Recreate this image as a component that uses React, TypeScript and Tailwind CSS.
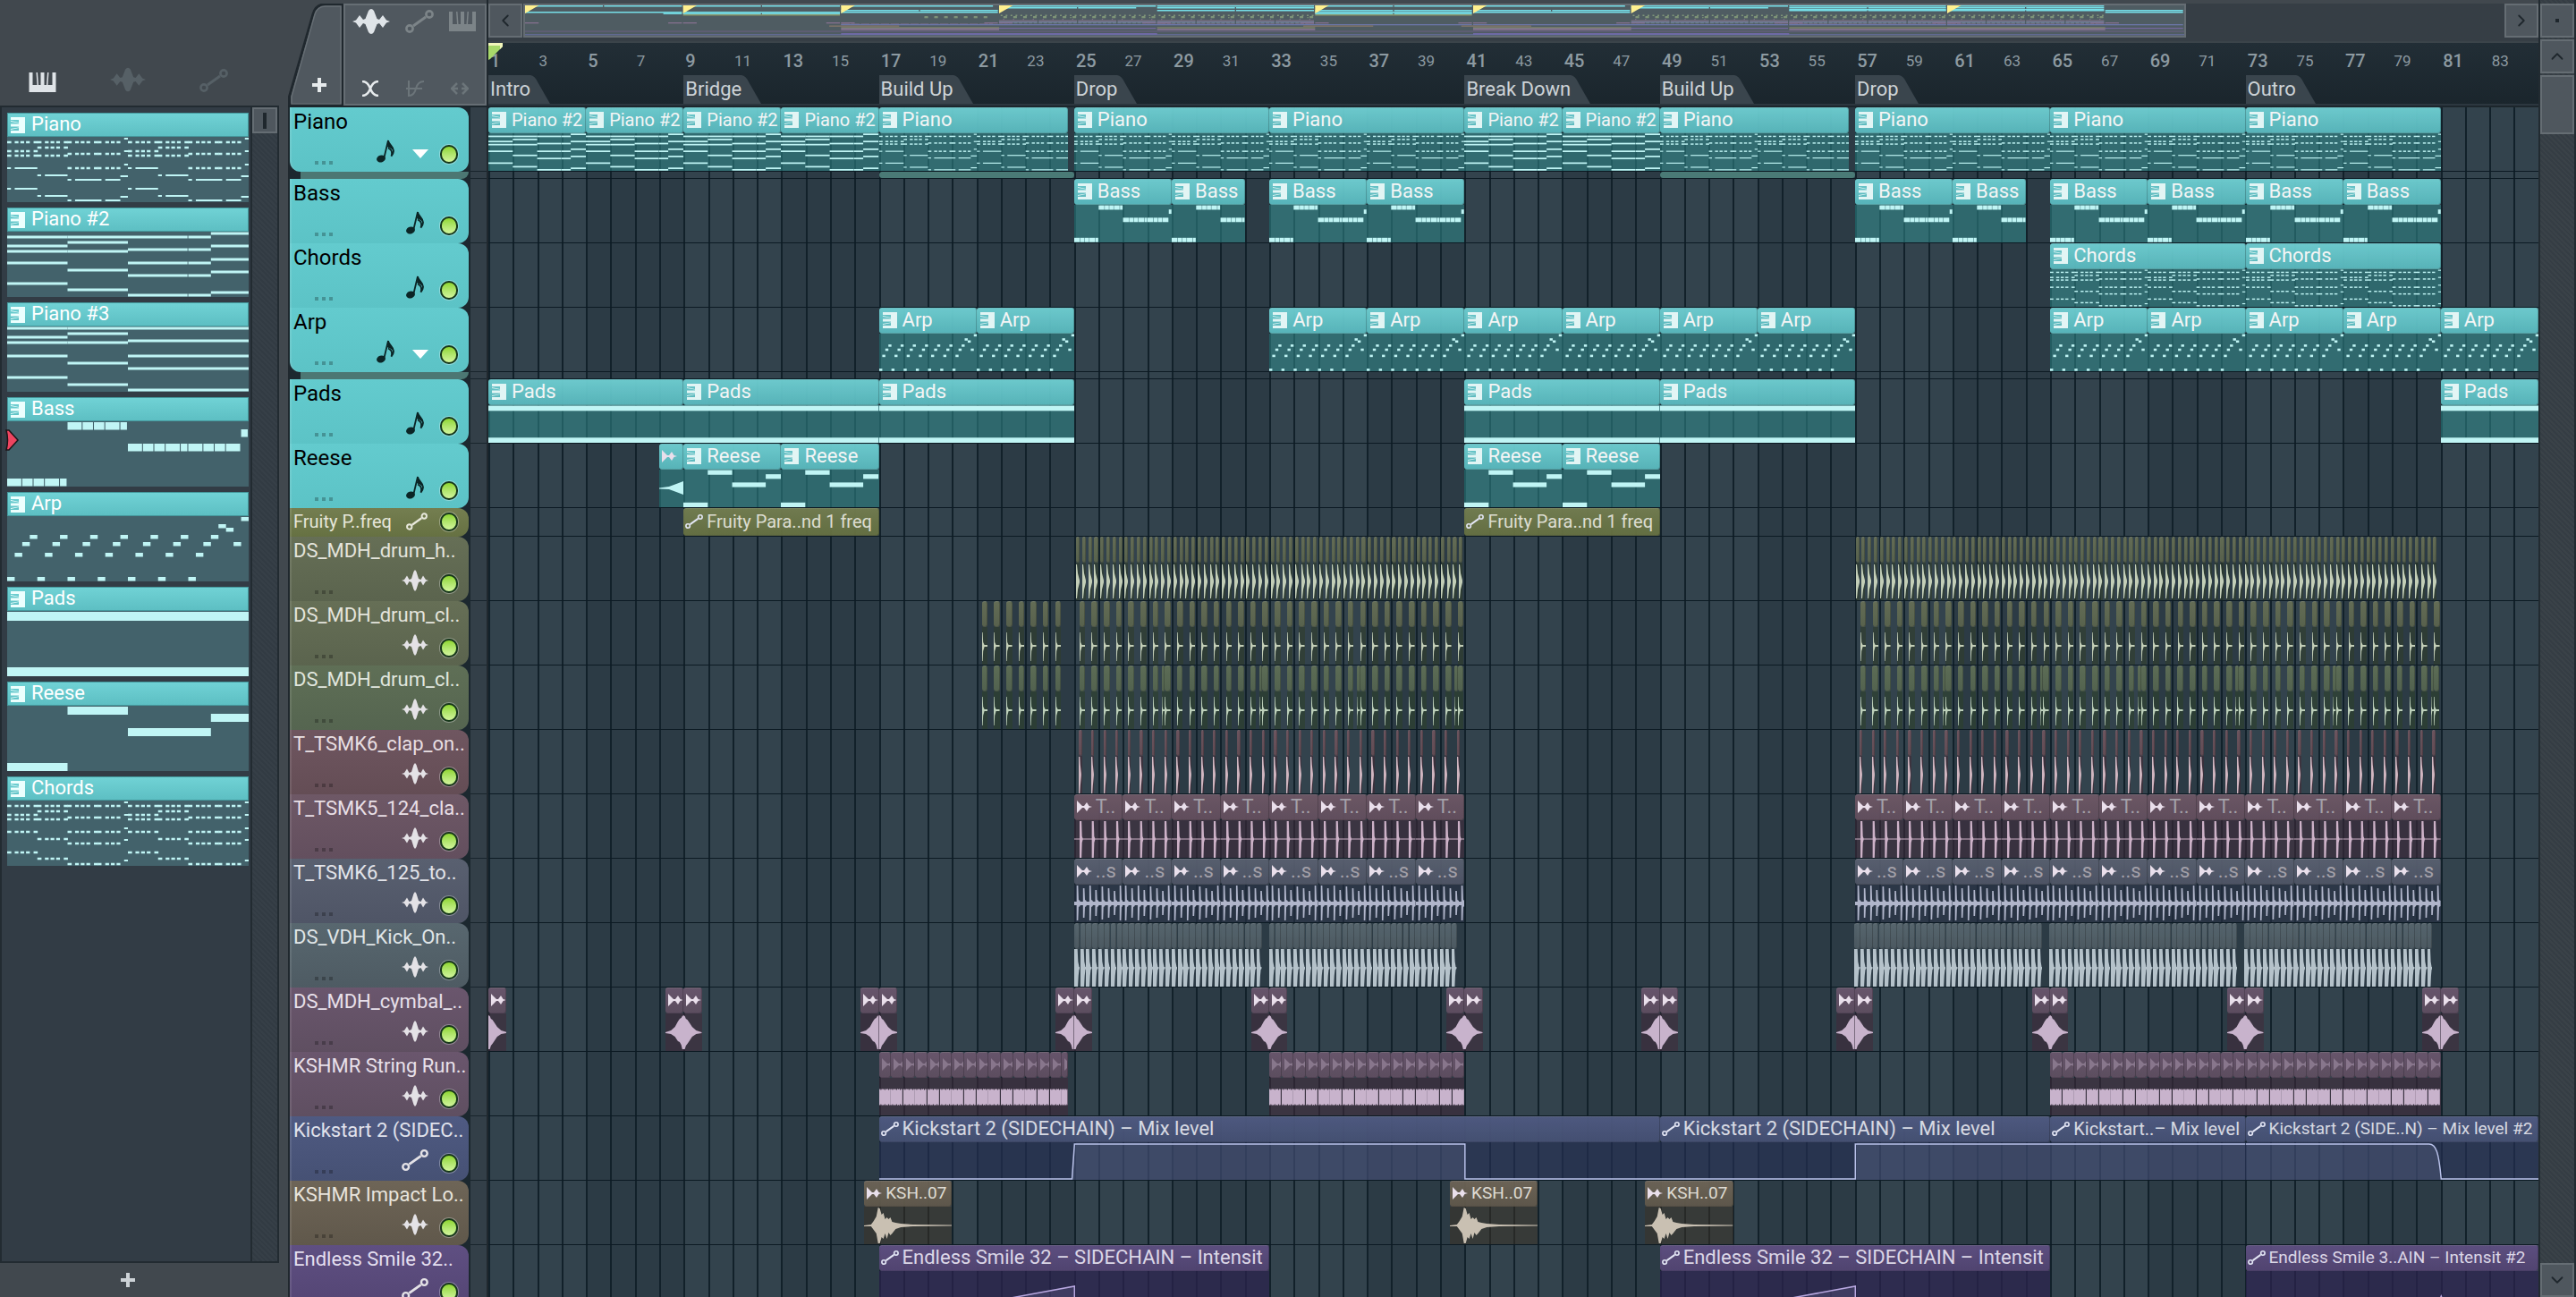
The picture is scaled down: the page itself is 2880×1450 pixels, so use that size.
import { Fragment } from 'react';
import { ChevronDown, ChevronLeft, ChevronRight, ChevronUp } from 'lucide-react';

const BARS = 84;

type Note = [x: number, y: number, w: number, h: number];
type Clip = { at: number; len: number; name?: string; art: string; size?: 'md' | 'sm'; dim?: boolean; curve?: string };
type Track = { name: string; theme: string; icon: 'note' | 'wave' | 'auto'; sub?: boolean; slim?: boolean; clips: Clip[] };

// Sixteen units to a bar, 73 units high.
const bars = (x: number, w: number, ys: number[], h = 3): Note[] => ys.map((y) => [x, y - h / 2, w, h]);
const hits = (x: number, steps: number[], ys: number[]): Note[] =>
    steps.flatMap((s) => bars(x + s, s === 14 || s === 0 ? 2.2 : 2, ys, 2.5));

const rhythm = [0, 4, 7, 10, 14];
const longRhythm = [0, 4, 7, 10, 14, 16, 20, 23, 26];

const pianoHalf = (x: number): Note[] => [
    ...hits(x, rhythm, [6, 16, 21]),
    ...bars(x, 2, [35, 58], 2),
    ...bars(x + 4, 12, [35, 58], 2),
    ...hits(x + 16, rhythm, [6, 12, 21]),
    ...bars(x + 16, 2, [43, 66], 2),
    ...bars(x + 20, 12, [43, 66], 2),
    ...hits(x + 32, longRhythm, [6, 19, 35]),
    ...bars(x + 32, 2, [48, 71], 2),
    ...bars(x + 36, 14, [48, 71], 2),
    ...bars(x + 52, 8, [48, 71], 2),
    ...bars(x + 60, 4, [44, 67], 2),
    ...bars(x + 62, 2, [2, 16, 31], 2),
];

const chordHalf = (x: number): Note[] => [
    ...hits(x, rhythm, [6, 16, 21, 35, 58]),
    ...hits(x + 16, rhythm, [6, 12, 21, 43, 65]),
    ...hits(x + 32, longRhythm, [6, 19, 35, 48, 71]),
    ...bars(x + 62, 2, [2, 16, 31, 44, 67], 2),
];

const pieces = (edges: number[], y: number): Note[] =>
    edges.slice(1).map((end, i) => [edges[i], y, end - edges[i] - 0.25, 8.5]);

const notes: Record<string, Note[]> = {
    Piano: [...pianoHalf(0), ...pianoHalf(64)],
    'Piano #2': [
        ...bars(0, 16, [6, 16, 22, 35, 58]),
        ...bars(16, 16, [6, 12, 22, 43, 65]),
        ...bars(32, 15.8, [6, 20, 35, 49, 71]),
        ...bars(48, 6, [6, 20, 35, 49, 71]),
        ...bars(54, 10, [2, 16, 31, 45, 68]),
    ],
    'Piano #3': [
        ...bars(0, 16, [2, 12, 18, 33, 57]),
        ...bars(16, 16, [2, 8, 18, 41, 65]),
        ...bars(32, 32, [2, 16, 33, 47, 71]),
    ],
    Bass: [
        ...pieces([0, 4, 7, 10, 14, 16], 64),
        ...pieces([16, 20, 23, 26, 30, 32], 1),
        ...pieces([32, 36, 39, 42, 46, 48, 52, 55, 58, 62], 25),
        ...pieces([62, 64], 9),
    ],
    Arp: [
        ...[0, 8, 16, 24, 32, 40, 48].flatMap((x): Note[] => [
            [x, 68, 2, 4.5],
            [x + 2, 41, 2, 4.5],
            [x + 4, 29, 2, 4.5],
            [x + 6, 21, 2, 4.5],
        ]),
        [56, 9, 2, 4.5],
        [58, 13, 2, 4.5],
        [60, 29, 2, 4.5],
        [62, 1, 2, 4.5],
    ],
    Pads: [
        [0, 1, 128, 10],
        [0, 63, 128, 10],
    ],
    Reese: [
        [0, 64, 16, 9],
        [16, 1, 16, 9],
        [32, 25, 22, 9],
        [54, 9, 10, 9],
    ],
    Chords: [...chordHalf(0), ...chordHalf(64)],
};

const waves: Record<string, string> = {
    hat: 'M0 2L25 2L50 12L100 20V22L50 30L25 40L0 40Z',
    snare: 'M0 6L10 6L18 17L40 20L100 20V22L40 22L18 27L10 38L0 38Z',
    clap: 'M0 1L40 1L55 10L90 20V22L55 34L40 42L0 42Z',
    kick: 'M0 0L56 0L66 14L84 20L100 20V22L84 23L72 30L62 42L0 42Z',
    rise: 'M0 20.5L40 19L70 16L100 13V28L70 25L40 22L0 21.5Z',
    swell: 'M0 21L30 19L52 15L68 9L78 6L86 5L92 3L100 2V40L92 40L86 35L78 32L68 31L52 26L30 23L0 22Z',
    crash: 'M0 2L8 3L14 6L22 7L32 10L48 15L70 19L100 21V22L70 23L48 26L32 31L22 34L14 36L8 40L0 40Z',
    string: 'M0 13L8 12L14 14L22 12L30 13L38 12L46 14L54 12L62 13L70 12L78 14L86 12L94 13V30L86 31L78 29L70 31L62 30L54 31L46 29L38 31L30 30L22 31L14 29L8 31L0 30Z',
    impact: 'M0 21L8 20L11 16L14 11L16 1L18 2L20 9L22 7L24 14L26 12L28 14L30 12L32 17L36 18L42 19L56 20L100 20.5V21.5L56 22L42 23L36 25L32 30L30 32L28 29L26 36L24 30L22 36L20 34L18 41L16 41L14 30L11 26L8 22L0 22Z',
};

// Two bars of claps, one spike every half bar.
const spikes = [0, 1, 2, 3].map((i) => {
    const x = 11 + i * 25;
    return `M${x} 1L${x + 4} 1L${x + 5} 18L${x + 7} 21L${x + 5} 25L${x + 4} 42L${x} 42Z`;
});
waves.claps = `M0 20.5H100V21.5H0Z${spikes.join('')}`;

const tops = [[5, 1], [18, 4], [31, 1], [43, 6], [56, 2], [69, 4], [81, 7], [93, 1]].map(
    ([x, y]) => `M${x} ${y}L${x + 3} ${y}L${x + 4} 17L${x + 7} 18V24L${x + 4} 25L${x + 3} ${41 - y}L${x} ${41 - y}Z`
);
waves.tops = `M0 19H100V23H0Z${tops.join('')}`;

const every = (from: number, to: number, step: number, offset: number, len: number, art: string, name?: string): Clip[] => {
    const out: Clip[] = [];
    for (let at = from; at < to - 0.01; at += step) {
        out.push({ at: at + offset, len: Math.min(len, to - at - offset), art, name, dim: true });
    }
    return out;
};

const pattern = (name: string, len: number, ...starts: number[]): Clip[] =>
    starts.map((at) => ({ at, len, name, art: name, size: name === 'Piano #2' ? 'md' : undefined }));

const tracks: Track[] = [
    {
        name: 'Piano', theme: 'teal', icon: 'note', sub: true,
        clips: [
            ...pattern('Piano #2', 4, 1, 5, 9, 13),
            ...pattern('Piano', 7.75, 17),
            ...pattern('Piano', 8, 25, 33),
            ...pattern('Piano #2', 4, 41, 45),
            ...pattern('Piano', 7.75, 49),
            ...pattern('Piano', 8, 57, 65, 73),
        ],
    },
    {
        name: 'Bass', theme: 'teal', icon: 'note',
        clips: [
            ...pattern('Bass', 4, 25), ...pattern('Bass', 3, 29), ...pattern('Bass', 4, 33, 37),
            ...pattern('Bass', 4, 57), ...pattern('Bass', 3, 61), ...pattern('Bass', 4, 65, 69, 73, 77),
        ],
    },
    { name: 'Chords', theme: 'teal', icon: 'note', clips: pattern('Chords', 8, 65, 73) },
    { name: 'Arp', theme: 'teal', icon: 'note', sub: true, clips: pattern('Arp', 4, 17, 21, 33, 37, 41, 45, 49, 53, 65, 69, 73, 77, 81) },
    { name: 'Pads', theme: 'teal', icon: 'note', clips: [...pattern('Pads', 8, 1, 9, 17, 41, 49), ...pattern('Pads', 4, 81)] },
    { name: 'Reese', theme: 'teal', icon: 'note', clips: [{ at: 8, len: 1, art: 'rise', name: '' }, ...pattern('Reese', 4, 9, 13, 41, 45)] },
    {
        name: 'Fruity P..freq', theme: 'lime', icon: 'auto', slim: true,
        clips: [9, 41].map((at) => ({ at, len: 8, art: 'auto', name: 'Fruity Para..nd 1 freq', size: 'md' as const })),
    },
    { name: 'DS_MDH_drum_h..', theme: 'olive', icon: 'wave', clips: [...every(25, 41, 0.25, 0.08, 0.15, 'hat'), ...every(57, 81, 0.25, 0.08, 0.15, 'hat')] },
    {
        name: 'DS_MDH_drum_cl..', theme: 'olive', icon: 'wave',
        clips: [...every(21, 24.5, 0.5, 0.22, 0.24, 'snare'), ...every(25, 41, 0.5, 0.22, 0.24, 'snare'), ...every(57, 81, 0.5, 0.22, 0.24, 'snare')],
    },
    {
        name: 'DS_MDH_drum_cl..', theme: 'moss', icon: 'wave',
        clips: [
            ...every(21, 24.5, 0.5, 0.22, 0.24, 'snare'),
            ...every(25, 41, 0.5, 0.22, 0.24, 'snare'),
            ...every(57, 81, 0.5, 0.22, 0.24, 'snare'),
            // pickup hit before the last clap of each phrase
            ...every(25, 41, 4, 3.6, 0.12, 'snare'),
            ...every(57, 81, 4, 3.6, 0.12, 'snare'),
        ].sort((a, b) => a.at - b.at),
    },
    { name: 'T_TSMK6_clap_on..', theme: 'rose', icon: 'wave', clips: [...every(25, 41, 0.5, 0.2, 0.12, 'clap'), ...every(57, 81, 0.5, 0.2, 0.12, 'clap')] },
    { name: 'T_TSMK5_124_cla..', theme: 'mauve', icon: 'wave', clips: [...every(25, 41, 2, 0, 2, 'claps', 'T..'), ...every(57, 81, 2, 0, 2, 'claps', 'T..')] },
    { name: 'T_TSMK6_125_to..', theme: 'slate', icon: 'wave', clips: [...every(25, 41, 2, 0, 2, 'tops', '..s'), ...every(57, 81, 2, 0, 2, 'tops', '..s')] },
    { name: 'DS_VDH_Kick_On..', theme: 'steel', icon: 'wave', clips: [25, 33, 57, 65, 73].flatMap((at) => every(at, at + 7.7, 0.25, 0, 0.24, 'kick')) },
    {
        name: 'DS_MDH_cymbal_..', theme: 'plum', icon: 'wave',
        clips: [1, 9, 17, 25, 33, 41, 49, 57, 65, 73, 81].flatMap((at) => [
            ...(at > 1 ? [{ at: at - 0.75, len: 0.75, art: 'swell', name: '' }] : []),
            { at, len: 0.75, art: 'crash', name: '' },
        ]),
    },
    {
        name: 'KSHMR String Run..', theme: 'plum', icon: 'wave',
        clips: [...every(17, 24.75, 0.5, 0, 0.5, 'string', ''), ...every(33, 41, 0.5, 0, 0.5, 'string', ''), ...every(65, 81, 0.5, 0, 0.5, 'string', '')],
    },
    {
        name: 'Kickstart 2 (SIDEC..', theme: 'blue', icon: 'auto',
        clips: [
            { at: 17, len: 32, art: 'auto', name: 'Kickstart 2 (SIDECHAIN) – Mix level', curve: 'M0 41H79L80 2H240V41H320' },
            { at: 49, len: 16, art: 'auto', name: 'Kickstart 2 (SIDECHAIN) – Mix level', curve: 'M0 41H80V2H160' },
            { at: 65, len: 8, art: 'auto', name: 'Kickstart..– Mix level', size: 'md', curve: 'M0 2H80' },
            { at: 73, len: 12, art: 'auto', name: 'Kickstart 2 (SIDE..N) – Mix level #2', size: 'sm', curve: 'M0 2H75C78 2 79 12 80 41H120' },
        ],
    },
    { name: 'KSHMR Impact Lo..', theme: 'sand', icon: 'wave', clips: [16.4, 40.4, 48.4].map((at) => ({ at, len: 3.6, art: 'impact', name: 'KSH..07', size: 'sm' as const })) },
    {
        name: 'Endless Smile 32..', theme: 'violet', icon: 'auto',
        clips: [
            { at: 17, len: 16, art: 'auto', name: 'Endless Smile 32 – SIDECHAIN – Intensit', curve: 'M30 42L80 17V42' },
            { at: 49, len: 16, art: 'auto', name: 'Endless Smile 32 – SIDECHAIN – Intensit', curve: 'M30 42L80 17V42' },
            { at: 73, len: 12, art: 'auto', name: 'Endless Smile 3..AIN – Intensit #2', size: 'sm', curve: 'M78 42L80 28L82 42' },
        ],
    },
];

const themes: Record<string, { head: string; body: string; ink: string; map: string; text: string }> = {
    teal: { head: 'from-[#6fd0d3] to-[#5ababf]', body: 'bg-[#31969680]', ink: '#c0f5f5', map: '#76dfe8', text: 'text-white' },
    lime: { head: 'from-[#747e50] to-[#667142]', body: '', ink: '#fff7c8', map: '#8a9468', text: 'text-[#e6e6da]' },
    olive: { head: 'from-[#666f56] to-[#5b644e]', body: 'bg-[#303c2ca0]', ink: '#c3ceb7', map: '#7e9478', text: 'text-[#e4e4dc]' },
    moss: { head: 'from-[#5f6f56] to-[#556550]', body: 'bg-[#2c3f2ca0]', ink: '#bccfb9', map: '#7e9478', text: 'text-[#e0e6de]' },
    rose: { head: 'from-[#6f5660] to-[#644d55]', body: 'bg-[#422a36a0]', ink: '#d0b6c0', map: '#7d6f86', text: 'text-[#e8dfe2]' },
    mauve: { head: 'from-[#6e5866] to-[#634f5e]', body: 'bg-[#422a3a90]', ink: '#cdb2c8', map: '#7d6f86', text: 'text-[#e8dfe6]' },
    slate: { head: 'from-[#596070] to-[#4f5566]', body: 'bg-[#283044a0]', ink: '#b0b5ca', map: '#6d7c98', text: 'text-[#e2e4ea]' },
    steel: { head: 'from-[#58676f] to-[#4e5b63]', body: 'bg-[#2c3b4560]', ink: '#b5c2ca', map: '#6b7c88', text: 'text-[#e0e6e8]' },
    plum: { head: 'from-[#6a566d] to-[#5f4f61]', body: 'bg-[#422a3a90]', ink: '#c8b3cc', map: '#84708f', text: 'text-[#e8e0ea]' },
    blue: { head: 'from-[#4f5a82] to-[#465174]', body: 'bg-[#263056a0]', ink: '#b9c2ea', map: '#6b76a8', text: 'text-[#e0e2ec]' },
    sand: { head: 'from-[#6e6557] to-[#60584b]', body: 'bg-[#3c322380]', ink: '#c9c0b2', map: '#85786a', text: 'text-[#e8e4dc]' },
    violet: { head: 'from-[#5f4f82] to-[#534573]', body: 'bg-[#2d2350b0]', ink: '#b8a8e0', map: '#74689f', text: 'text-[#e4dff0]' },
};

const markers: [string, number][] = [
    ['Intro', 1], ['Bridge', 9], ['Build Up', 17], ['Drop', 25], ['Break Down', 41], ['Build Up', 49], ['Drop', 57], ['Outro', 73],
];

const PianoIcon = ({ className }: { className?: string }) => (
    <svg viewBox="0 0 16 18" className={className} fill="currentColor">
        <path d="M0 0H16V18H0V15H9V12L0 14V13L9 11.500V10.500H0V7.500H9V6.500L0 5V4L9 6V3H0Z" />
    </svg>
);

const KeysIcon = ({ className }: { className?: string }) => (
    <svg viewBox="0 0 30 22" className={className} fill="currentColor">
        <path d="M0 0H4V14H9L8 0H9.500L10.500 14H13V0H17V14H19.500L20.500 0H22L21 14H26V0H30V22H0Z" />
    </svg>
);

const WaveIcon = ({ className }: { className?: string }) => (
    <svg viewBox="0 0 42 28" className={className} fill="currentColor">
        <path d="M0 14L4 12.500L8 7L12 12L14.500 11L18 2Q21 -2 24 2L27.500 11L30 12L34 7L38 12.500L42 14L38 15.500L34 21L30 16L27.500 17L24 26Q21 30 18 26L14.500 17L12 16L8 21L4 15.500Z" />
    </svg>
);

const TrackWaveIcon = ({ className }: { className?: string }) => (
    <svg viewBox="0 0 30 24" className={className} fill="currentColor">
        <path d="M0 12L3 11L6 6.500L8.500 11L11 10L13.500 2L15 0L16.500 2L19 10L21.500 11L24 6.500L27 11L30 12L27 13L24 17.500L21.500 13L19 14L16.500 22L15 24L13.500 22L11 14L8.500 13L6 17.500L3 13Z" />
    </svg>
);

const AutoIcon = ({ className }: { className?: string }) => (
    <svg viewBox="0 0 32 26" className={className} fill="none" stroke="currentColor" strokeWidth="2.600">
        <circle cx="5" cy="21" r="3.600" />
        <circle cx="27" cy="5" r="3.600" />
        <path d="M9 18L23 8" strokeWidth="3" />
    </svg>
);

const AudioIcon = ({ className }: { className?: string }) => (
    <svg viewBox="0 0 17 14" className={className} fill="currentColor">
        <path d="M0 0L6 6H8L11 2L13.500 6L17 7L13.500 8L11 12L8 8H6L0 14Z" />
    </svg>
);

const NoteIcon = ({ className }: { className?: string }) => (
    <svg viewBox="0 0 20 26" className={className}>
        <ellipse cx="5" cy="21.500" rx="5" ry="4" transform="rotate(-18 5 21.500)" fill="currentColor" />
        <path d="M8.500 20L13 1C13.500 6 19.500 8 19 13C18.900 15 18 17 16.500 18.500C18 14 16.500 11 13 9.500" fill="none" stroke="currentColor" strokeWidth="1.800" />
        <path d="M13 1C13.500 6 19.500 8 19 13C17 9.500 14 9.500 12 8Z" fill="currentColor" />
    </svg>
);

const NoteArt = ({ name, units }: { name: string; units: number }) => (
    <svg viewBox={`0 0 ${units} 73`} preserveAspectRatio="none" className="block h-full w-full" fill="#c0f5f5">
        {notes[name].map(([x, y, w, h], i) => (
            <rect key={i} x={x} y={y} width={w} height={h} />
        ))}
    </svg>
);

const ClipArt = ({ clip, ink }: { clip: Clip; ink: string }) => {
    if (notes[clip.art]) return <NoteArt name={clip.art} units={clip.len * 16} />;
    if (clip.curve) {
        return (
            <svg viewBox={`0 0 ${clip.len * 10} 42`} preserveAspectRatio="none" className="block h-full w-full">
                <path d={`${clip.curve}V42H0Z`} fill={ink} fillOpacity="0.14" />
                <path d={clip.curve} fill="none" stroke={ink} strokeWidth="1.500" vectorEffect="non-scaling-stroke" />
            </svg>
        );
    }
    return (
        <svg viewBox="0 0 100 42" preserveAspectRatio="none" className="block h-full w-full">
            <path d={waves[clip.art]} fill={ink} />
        </svg>
    );
};

const sizes = { lg: 'text-[22px]', md: 'text-[20px]', sm: 'text-[19px]' };

const ClipView = ({ clip, gap, theme, slim }: { clip: Clip; gap: number; theme: string; slim?: boolean }) => {
    const t = themes[theme];
    const isPattern = Boolean(notes[clip.art]);
    return (
        <div
            className="flex h-full shrink-0 flex-col overflow-hidden"
            style={{ marginLeft: `${(gap / BARS) * 100}%`, width: `${(clip.len / BARS) * 100}%` }}
        >
            <div className={`flex shrink-0 items-center overflow-hidden rounded-[3px] border-y border-r border-black/20 border-t-white/15 bg-linear-to-b pb-0.5 opacity-95 ${slim ? 'h-full' : 'h-[29px]'} ${t.head}`}>
                {clip.name !== undefined && (
                    <>
                        {isPattern && <PianoIcon className="ml-1 h-[18px] w-4 shrink-0 text-[#ecfffe]" />}
                        {clip.art === 'auto' && <AutoIcon className="ml-0.5 h-[18px] w-5 shrink-0 text-[#eef0ff]" />}
                        {!isPattern && clip.art !== 'auto' && (
                            <AudioIcon className={`ml-[3px] h-3.5 w-[17px] shrink-0 ${clip.art === 'string' ? 'text-[#8d7a90]' : 'text-[#f4e8f4]'}`} />
                        )}
                        <span className={`${isPattern ? 'ml-1.5' : 'ml-1'} leading-6 whitespace-pre ${sizes[clip.size ?? 'lg']} ${clip.dim ? 'text-[#aaa6ae]' : t.text}`}>
                            {clip.name}
                        </span>
                    </>
                )}
            </div>
            {!slim && (
                <div className={`min-h-0 grow ${t.body}`}>
                    <ClipArt clip={clip} ink={t.ink} />
                </div>
            )}
        </div>
    );
};

const Lane = ({ track }: { track: Track }) => (
    <>
        <div className={`relative flex overflow-hidden border-b border-[#0c1a23] ${track.slim ? 'h-8' : 'h-[72px]'}`}>
            {track.clips.map((clip, i) => {
                const prev = track.clips[i - 1];
                return <ClipView key={i} clip={clip} gap={clip.at - (prev ? prev.at + prev.len : 1)} theme={track.theme} slim={track.slim} />;
            })}
        </div>
        {track.sub && (
            <div className="relative flex h-2 border-b border-[#0c1a23]">
                {track.name === 'Piano' &&
                    [16, 24].map((gap) => (
                        <div
                            key={gap}
                            className="rounded-sm bg-[#4a7a76]"
                            style={{ marginLeft: `${(gap / BARS) * 100}%`, width: `${(8 / BARS) * 100}%` }}
                        />
                    ))}
            </div>
        )}
    </>
);

const Led = ({ name }: { name: string }) => (
    <button
        aria-label={`Mute ${name}`}
        className="h-[21px] w-5 shrink-0 rounded-full border-2 border-[#16371a] bg-linear-to-b from-[#8fd62c] to-[#d2f59c] shadow-[0_0_0_1px_#ffffff50]"
    />
);

const TrackHead = ({ track }: { track: Track }) => {
    const t = themes[track.theme];
    const teal = track.theme === 'teal';
    return (
        <>
            <div className={`flex bg-[#1c282f] ${track.slim ? 'h-8' : 'h-[72px]'}`}>
                <div className={`w-[200px] overflow-hidden rounded-r-xl border-l-2 border-white/10 bg-linear-to-b ${teal ? 'from-[#63cbce] to-[#5cc3c6]' : t.head} ${track.sub ? 'rounded-bl-xl' : ''}`}>
                    {track.slim ? (
                        <div className="flex h-full items-center gap-[14px] pr-3 pb-0.5 pl-0.5">
                            <span className={`text-[20px] leading-7 whitespace-nowrap ${t.text}`}>{track.name}</span>
                            <AutoIcon className="ml-auto h-5 w-6 shrink-0 text-[#e8e8dc]" />
                            <Led name={track.name} />
                        </div>
                    ) : (
                        <>
                            <div className={`h-8 pl-0.5 leading-8 whitespace-nowrap ${teal ? 'text-[24px] text-black' : `text-[22px] ${t.text}`}`}>{track.name}</div>
                            <div className="flex h-10 items-center pr-3 pl-[26px]">
                                <div className="mb-2 flex gap-1 self-end">
                                    <i className="size-1 bg-black/25" />
                                    <i className="size-1 bg-black/25" />
                                    <i className="size-1 bg-black/25" />
                                </div>
                                <div className={`mb-1.5 ml-auto flex w-[30px] justify-center ${teal ? 'text-[#0b2526]' : 'text-[#e4e2e6]'}`}>
                                    {track.icon === 'note' && <NoteIcon className="h-[26px] w-5" />}
                                    {track.icon === 'wave' && <TrackWaveIcon className="h-6 w-[30px]" />}
                                    {track.icon === 'auto' && <AutoIcon className="h-[26px] w-8" />}
                                </div>
                                {track.sub && (
                                    <button aria-label={`Expand ${track.name}`} className="ml-[15px]">
                                        <svg viewBox="0 0 18 10" className="h-2.5 w-[18px]"><path d="M0 0H18L9 10Z" fill="#fff" /></svg>
                                    </button>
                                )}
                                <div className="ml-[13px] flex">
                                    <Led name={track.name} />
                                </div>
                            </div>
                        </>
                    )}
                </div>
                <div className="ml-0.5 grow border-b border-[#18242c] bg-[#333f48]" />
            </div>
            {track.sub && (
                <div className="flex h-2 bg-[#1c282f]">
                    <div className="ml-3 w-[188px] rounded-br-lg bg-[#4c7773]" />
                    <div className="ml-0.5 grow border-b border-[#18242c] bg-[#333f48]" />
                </div>
            )}
        </>
    );
};

const picker: [string, number][] = [
    ['Piano', 128], ['Piano #2', 64], ['Piano #3', 64], ['Bass', 64], ['Arp', 64], ['Pads', 64], ['Reese', 64], ['Chords', 128],
];

const Picker = () => (
    <aside className="flex w-[312px] shrink-0 flex-col">
        <div className="flex h-[118px] items-end pb-[15px] pl-8">
            <button aria-label="Patterns" className="text-[#dfe4e8]"><KeysIcon className="h-[22px] w-[31px]" /></button>
            <button aria-label="Audio clips" className="ml-[60px] text-[#566066]"><WaveIcon className="h-7 w-10" /></button>
            <button aria-label="Automation clips" className="ml-[60px] text-[#566066]"><AutoIcon className="h-[26px] w-8" /></button>
        </div>
        <div className="flex min-h-0 grow border-2 border-[#222b31] bg-[#323c45]">
            <div className="flex grow flex-col gap-1.5 pt-1.5 pr-0.5 pl-1.5">
                {picker.map(([name, units]) => (
                    <div key={name} className="relative">
                        <div className="flex h-[27px] items-center border border-[#45999d] bg-linear-to-b from-[#70d2d5] to-[#5dbfc3] pl-[3px]">
                            <PianoIcon className="h-[18px] w-4 text-[#ecfffe]" />
                            <span className="ml-[7px] pb-0.5 text-[22px] leading-6 text-white">{name}</span>
                        </div>
                        <div className="h-[73px] bg-[#43626b]"><NoteArt name={name} units={units} /></div>
                        {name === 'Bass' && (
                            <svg viewBox="0 0 16 24" className="absolute top-9 -left-0.5 h-6 w-4">
                                <path d="M1 1L4 1L14 12L4 23L1 23Q4 12 1 1Z" fill="#ee4560" stroke="#1c1418" strokeWidth="1.500" />
                            </svg>
                        )}
                    </div>
                ))}
            </div>
            <div className="w-[30px] border-l-2 border-[#222b31] bg-[repeating-linear-gradient(45deg,#363f47_0_2px,#323b43_2px_4px)]">
                <div className="flex h-[29px] items-center justify-center border-2 border-[#656d73] bg-[#4f575e]">
                    <div className="h-[18px] w-1 bg-[#1f272d]" />
                </div>
            </div>
        </div>
        <button aria-label="Add pattern" className="flex h-[38px] shrink-0 items-center justify-center pr-[26px]">
            <svg viewBox="0 0 16 16" className="size-4"><path d="M6 0H10V6H16V10H10V16H6V10H0V6H6Z" fill="#ccd2d6" /></svg>
        </button>
    </aside>
);

const Tools = () => (
    <div className="flex w-[224px] shrink-0 border-r-2 border-[#20282e] pt-1">
        <div className="relative flex w-[62px] items-end justify-center pb-[15px] pl-2">
            <svg viewBox="0 0 62 114" className="absolute inset-0 h-full w-full">
                <path d="M1.500 114V104L28 12Q31 1 41 1H61V113H1.500Z" fill="#50585f" stroke="#20282e" strokeWidth="3" />
                <path d="M4 112V104L30 12Q33 3 42 3H59V112Z" fill="none" stroke="#666e74" strokeWidth="1.500" />
            </svg>
            <button aria-label="Add track" className="relative">
                <svg viewBox="0 0 16 16" className="size-4"><path d="M6 0H10V6H16V10H10V16H6V10H0V6H6Z" fill="#e6eaec" /></svg>
            </button>
        </div>
        <div className="flex grow flex-col justify-between border-2 border-[#666e74] bg-[#50585f] px-2 pt-1 pb-2">
            <div className="flex items-center justify-between pr-0.5">
                <button aria-label="Audio" className="text-[#dfe4e8]"><WaveIcon className="h-7 w-[42px]" /></button>
                <button aria-label="Automation" className="text-[#7c8488]"><AutoIcon className="h-[26px] w-8" /></button>
                <button aria-label="Patterns" className="text-[#7c8488]"><KeysIcon className="h-[22px] w-[30px]" /></button>
            </div>
            <div className="flex items-center justify-between px-2.5">
                <button aria-label="Crossfade">
                    <svg viewBox="0 0 20 18" className="h-[18px] w-5" fill="none" stroke="#e6eaec" strokeWidth="2.500"><path d="M1 1Q7 1 10 9T19 17M19 1Q13 1 10 9T1 17" /></svg>
                </button>
                <button aria-label="Curve">
                    <svg viewBox="0 0 20 18" className="h-[18px] w-5" fill="none" stroke="#6c757a" strokeWidth="2"><path d="M3 0V18M0 9H18M3 17Q9 17 11 9T20 1" /></svg>
                </button>
                <button aria-label="Stretch">
                    <svg viewBox="0 0 20 14" className="h-3.5 w-5" fill="none" stroke="#6c757a" strokeWidth="2.500"><path d="M7 1L1 7L7 13M13 1L19 7L13 13M2 7H8M12 7H18" /></svg>
                </button>
            </div>
        </div>
    </div>
);

const MapBand = ({ x, w, y, h, fill }: { x: number; w: number; y: number; h: number; fill: string }) => (
    <rect x={x - 1} y={y} width={w} height={h} fill={fill} />
);

const lanesY = [0, 2, 4, 5, 7, 8.5, 10, 10.5, 12, 13, 15, 16.5, 18, 19, 19, 20.500, 21, 22.500, 25];

const MiniMap = () => (
    <div className="h-[38px] w-[1859px] max-w-[83%] border-2 border-[#656d73] bg-[#4f5c62]">
        <svg viewBox="0 0 84 34" preserveAspectRatio="none" className="block h-full w-full">
            {tracks.map((track, i) => (
                <Fragment key={i}>
                    {track.clips.map((c, j) => (
                        <MapBand key={j} x={c.at} w={c.len - 0.06} y={lanesY[i]} h={i > 8 ? 1.3 : 1.5} fill={themes[track.theme].map} />
                    ))}
                </Fragment>
            ))}
            {[17, 33, 49, 65, 73].map((x) => (
                <Fragment key={x}>
                    <MapBand x={x} w={8} y={24.5} h={1} fill="#8f9468" />
                    <MapBand x={x} w={8} y={26} h={2} fill="#7d6f8a" />
                </Fragment>
            ))}
            <MapBand x={17} w={16} y={31} h={2} fill="#7068a4" />
            <MapBand x={49} w={16} y={31} h={2} fill="#7068a4" />
            <MapBand x={1} w={84} y={28.5} h={1.2} fill="#665f7c" />
            <MapBand x={1} w={84} y={32.3} h={1} fill="#6a70a6" />
            {markers.map(([, at]) => (
                <path key={at} d={`M${at - 1} 0h0.7L${at - 1} 9Z`} fill="#fff08f" />
            ))}
        </svg>
    </div>
);

const Ruler = () => (
    <div className="relative h-[72px] overflow-hidden border-t-2 border-[#3b444a] bg-linear-to-b from-[#222e36] to-[#1a252c]">
        <div className="flex h-9 items-end">
            {Array.from({ length: BARS / 2 }, (_, i) => (
                <span key={i} className={`w-0 grow pl-0.5 leading-8 text-[#8d9aa1] ${i % 2 === 0 ? 'text-[20px] font-medium' : 'text-[17px]'}`}>
                    {i * 2 + 1}
                </span>
            ))}
        </div>
        <div className="flex h-[34px] border-b-2 border-[#2c373f]">
            {markers.map(([name, at], i) => (
                <div key={at} className="flex" style={{ width: `${(((markers[i + 1]?.[1] ?? BARS + 1) - at) / BARS) * 100}%` }}>
                    <span className="bg-[#3a454d] pl-0.5 text-[22px] leading-8 whitespace-nowrap text-[#cdd3d7]">{name}</span>
                    <svg viewBox="0 0 22 34" preserveAspectRatio="none" className="h-full w-[22px]"><path d="M0 0Q5 1 8 8L22 34H0Z" fill="#3a454d" /></svg>
                </div>
            ))}
        </div>
        <svg viewBox="0 0 16 20" className="absolute top-0 left-0 h-5 w-4">
            <path d="M0 0H16V4L2 18L0 19Z" fill="#a8d96a" />
            <path d="M0 0H16V4L13 7V3H0Z" fill="#f1f6bb" />
        </svg>
    </div>
);

const GridLines = () => (
    <div className="absolute inset-0 flex">
        {Array.from({ length: BARS }, (_, i) => (
            <div key={i} className={`grow border-l-2 border-[#12212a] ${Math.floor(i / 4) % 2 === 0 ? 'bg-[#33434d]' : 'bg-[#2c3b45]'}`} />
        ))}
    </div>
);

const boxButton = 'flex h-[38px] w-[38px] shrink-0 items-center justify-center border-2 border-[#656d73] bg-[#4f575e] text-[#1f272d]';

const App = () => (
    <div className="flex h-screen w-full overflow-hidden bg-[#41484e] font-['Roboto',sans-serif]">
        <Picker />
        <main className="ml-2.5 flex min-w-0 grow flex-col">
            <div className="flex h-[118px] shrink-0">
                <Tools />
                <div className="min-w-0 grow pt-1">
                    <div className="flex h-[42px] gap-px bg-[#363e45]">
                        <button aria-label="Scroll left" className={boxButton}><ChevronLeft size={22} /></button>
                        <MiniMap />
                        <div className="grow" />
                        <button aria-label="Scroll right" className={boxButton}><ChevronRight size={22} /></button>
                    </div>
                    <Ruler />
                </div>
            </div>
            <div className="flex min-h-0 grow overflow-hidden border-t-2 border-[#1c262c]">
                <div className="w-[224px] shrink-0 border-x-2 border-[#20282e]">
                    {tracks.map((track, i) => (
                        <TrackHead key={i} track={track} />
                    ))}
                </div>
                <div className="relative min-w-0 grow">
                    <GridLines />
                    {tracks.map((track, i) => (
                        <Lane key={i} track={track} />
                    ))}
                </div>
            </div>
        </main>
        <div className="flex w-[42px] shrink-0 flex-col gap-0.5 border-x-2 border-[#222b31] bg-[repeating-linear-gradient(45deg,#3a4248_0_2px,#353d44_2px_4px)] pt-1">
            <button aria-label="Menu" className={boxButton}><span className="size-1 bg-[#1f272d]" /></button>
            <button aria-label="Scroll up" className={boxButton}><ChevronUp size={22} /></button>
            <div className="h-[66px] border-2 border-[#656d73] bg-[#4f575e]" />
            <div className="grow" />
            <button aria-label="Scroll down" className={boxButton}><ChevronDown size={22} /></button>
        </div>
    </div>
);

export default App;
